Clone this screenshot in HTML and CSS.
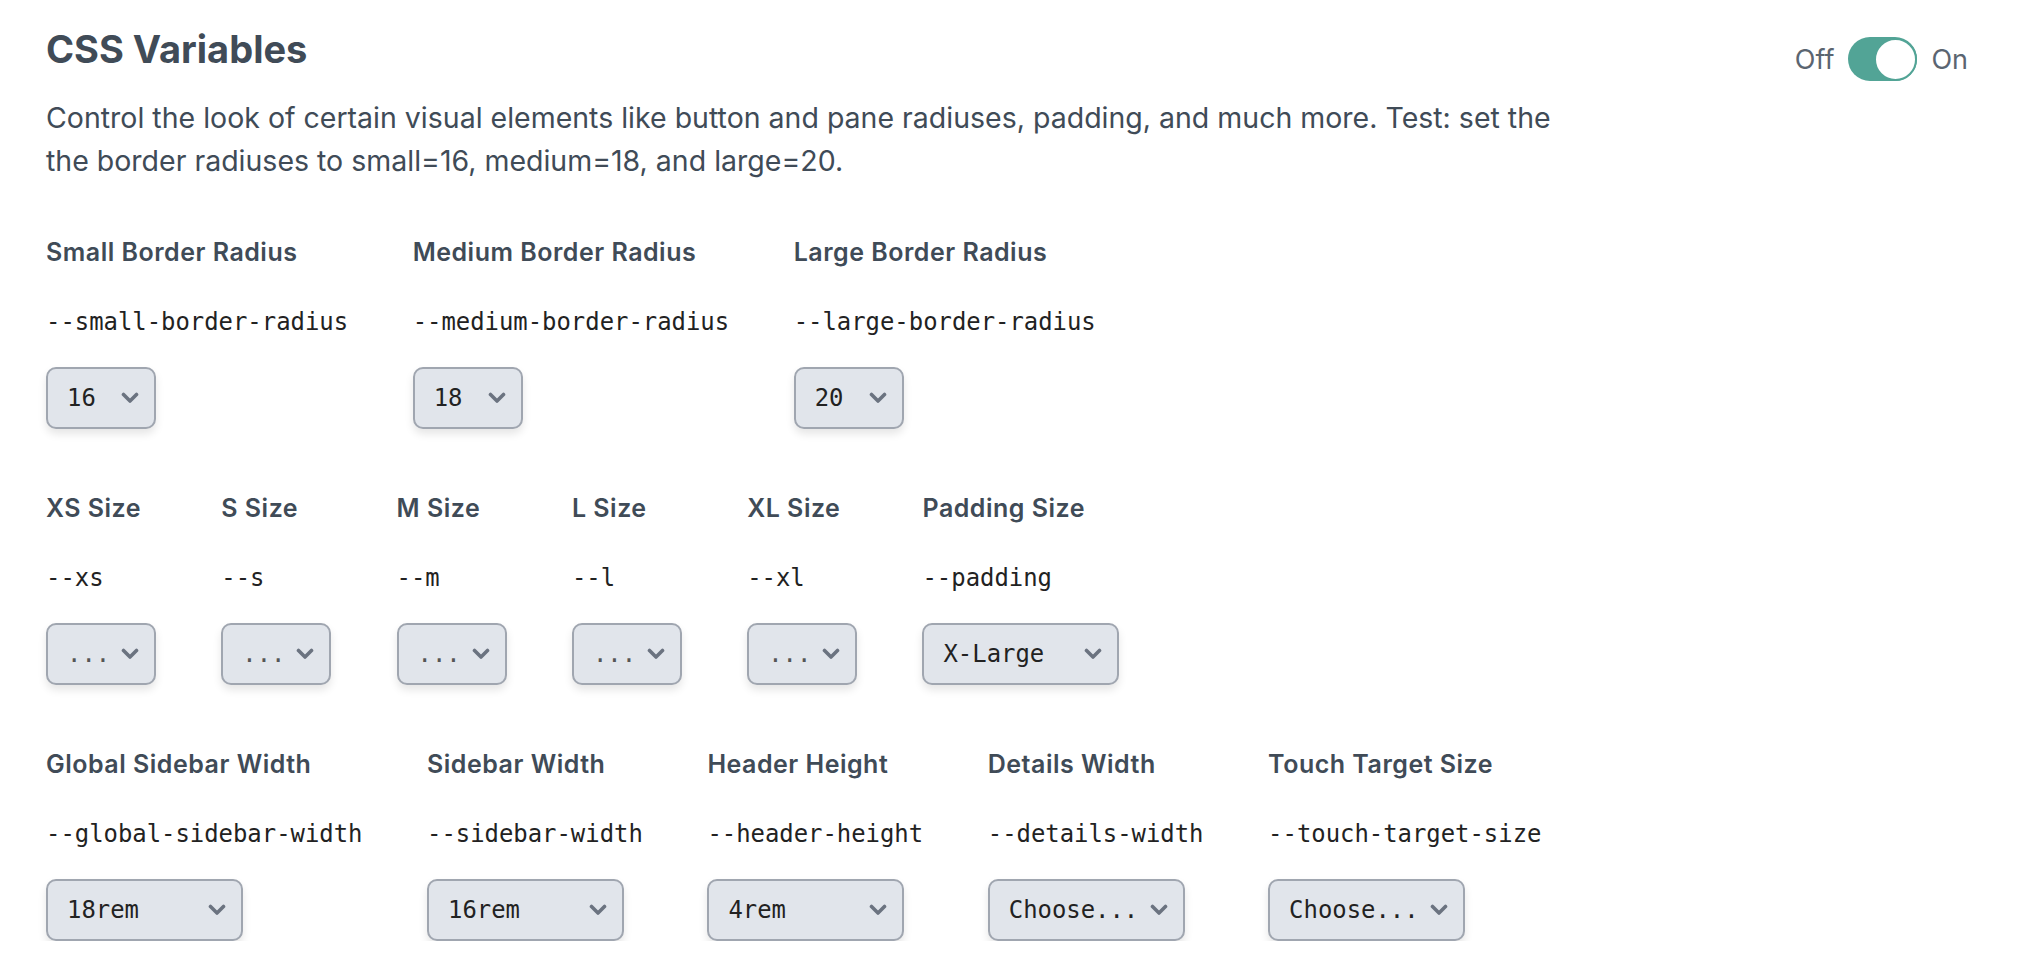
FILE: index.html
```html
<!DOCTYPE html>
<html lang="en">
<head>
<meta charset="utf-8">
<title>CSS Variables</title>
<link rel="stylesheet" href="styles.css">
</head>
<body>
<main class="page">
  <header class="head">
    <h1 class="title">CSS Variables</h1>
    <div class="toggle">
      <span class="toggle-text">Off</span>
      <span class="track"><span class="knob"></span></span>
      <span class="toggle-text">On</span>
    </div>
  </header>
  <p class="desc">Control the look of certain visual elements like button and pane radiuses, padding, and much more. Test: set the the border radiuses to small=16, medium=18, and large=20.</p>

  <section class="row">
    <div class="field">
      <h3 class="label">Small Border Radius</h3>
      <code class="var">--small-border-radius</code>
      <div class="select sm"><span class="val">16</span><svg class="chev" viewBox="0 0 18 12"><path d="M2.5 2.5 L9 9 L15.5 2.5"/></svg></div>
    </div>
    <div class="field">
      <h3 class="label">Medium Border Radius</h3>
      <code class="var">--medium-border-radius</code>
      <div class="select sm"><span class="val">18</span><svg class="chev" viewBox="0 0 18 12"><path d="M2.5 2.5 L9 9 L15.5 2.5"/></svg></div>
    </div>
    <div class="field">
      <h3 class="label">Large Border Radius</h3>
      <code class="var">--large-border-radius</code>
      <div class="select sm"><span class="val">20</span><svg class="chev" viewBox="0 0 18 12"><path d="M2.5 2.5 L9 9 L15.5 2.5"/></svg></div>
    </div>
  </section>

  <section class="row sizes">
    <div class="field">
      <h3 class="label">XS Size</h3>
      <code class="var">--xs</code>
      <div class="select sm"><span class="val dots">...</span><svg class="chev" viewBox="0 0 18 12"><path d="M2.5 2.5 L9 9 L15.5 2.5"/></svg></div>
    </div>
    <div class="field">
      <h3 class="label">S Size</h3>
      <code class="var">--s</code>
      <div class="select sm"><span class="val dots">...</span><svg class="chev" viewBox="0 0 18 12"><path d="M2.5 2.5 L9 9 L15.5 2.5"/></svg></div>
    </div>
    <div class="field">
      <h3 class="label">M Size</h3>
      <code class="var">--m</code>
      <div class="select sm"><span class="val dots">...</span><svg class="chev" viewBox="0 0 18 12"><path d="M2.5 2.5 L9 9 L15.5 2.5"/></svg></div>
    </div>
    <div class="field">
      <h3 class="label">L Size</h3>
      <code class="var">--l</code>
      <div class="select sm"><span class="val dots">...</span><svg class="chev" viewBox="0 0 18 12"><path d="M2.5 2.5 L9 9 L15.5 2.5"/></svg></div>
    </div>
    <div class="field">
      <h3 class="label">XL Size</h3>
      <code class="var">--xl</code>
      <div class="select sm"><span class="val dots">...</span><svg class="chev" viewBox="0 0 18 12"><path d="M2.5 2.5 L9 9 L15.5 2.5"/></svg></div>
    </div>
    <div class="field">
      <h3 class="label">Padding Size</h3>
      <code class="var">--padding</code>
      <div class="select lg"><span class="val">X-Large</span><svg class="chev" viewBox="0 0 18 12"><path d="M2.5 2.5 L9 9 L15.5 2.5"/></svg></div>
    </div>
  </section>

  <section class="row">
    <div class="field">
      <h3 class="label">Global Sidebar Width</h3>
      <code class="var">--global-sidebar-width</code>
      <div class="select lg"><span class="val">18rem</span><svg class="chev" viewBox="0 0 18 12"><path d="M2.5 2.5 L9 9 L15.5 2.5"/></svg></div>
    </div>
    <div class="field">
      <h3 class="label">Sidebar Width</h3>
      <code class="var">--sidebar-width</code>
      <div class="select lg"><span class="val">16rem</span><svg class="chev" viewBox="0 0 18 12"><path d="M2.5 2.5 L9 9 L15.5 2.5"/></svg></div>
    </div>
    <div class="field">
      <h3 class="label">Header Height</h3>
      <code class="var">--header-height</code>
      <div class="select lg"><span class="val">4rem</span><svg class="chev" viewBox="0 0 18 12"><path d="M2.5 2.5 L9 9 L15.5 2.5"/></svg></div>
    </div>
    <div class="field">
      <h3 class="label">Details Width</h3>
      <code class="var">--details-width</code>
      <div class="select lg"><span class="val">Choose...</span><svg class="chev" viewBox="0 0 18 12"><path d="M2.5 2.5 L9 9 L15.5 2.5"/></svg></div>
    </div>
    <div class="field">
      <h3 class="label">Touch Target Size</h3>
      <code class="var">--touch-target-size</code>
      <div class="select lg"><span class="val">Choose...</span><svg class="chev" viewBox="0 0 18 12"><path d="M2.5 2.5 L9 9 L15.5 2.5"/></svg></div>
    </div>
  </section>
</main>
</body>
</html>
```
FILE: styles.css
```css
html, body {
  margin: 0;
  padding: 0;
  background: #ffffff;
}

body {
  font-family: Inter, "Noto Sans", sans-serif;
  color: #404b57;
}

.page {
  padding: 27px 60px 0 46px;
}

.head {
  display: flex;
  justify-content: space-between;
  align-items: flex-start;
}

.title {
  margin: 0;
  font-size: 38px;
  line-height: 44px;
  font-weight: 700;
  color: #404b57;
  letter-spacing: 0;
}

.toggle {
  display: flex;
  align-items: center;
  gap: 14px;
  margin-top: 10px;
}

.toggle-text {
  font-size: 27px;
  color: #5b6571;
}

.track {
  display: flex;
  justify-content: flex-end;
  align-items: center;
  width: 69px;
  height: 44px;
  border-radius: 22px;
  background: #52a496;
}

.knob {
  width: 43px;
  height: 43px;
  border-radius: 50%;
  background: #ffffff;
  border: 2px solid #52a496;
  box-sizing: border-box;
}

.desc {
  margin: 15px 0 0 0;
  max-width: 1540px;
  font-size: 28.5px;
  line-height: 43px;
  color: #404b57;
}

.row {
  display: flex;
  gap: 64.6px;
  margin-top: 54px;
}

.row + .row {
  margin-top: 63px;
}

.row.sizes {
  gap: 65.3px;
}

.field {
  display: flex;
  flex-direction: column;
  align-items: flex-start;
  flex: none;
}

.label {
  margin: 0;
  font-size: 25px;
  line-height: 32px;
  font-weight: 600;
  letter-spacing: 0.5px;
  color: #404b57;
  white-space: nowrap;
}

.var {
  margin-top: 38px;
  font-family: "DejaVu Sans Mono", "Liberation Mono", monospace;
  font-size: 23.9px;
  line-height: 32px;
  color: #222;
  white-space: nowrap;
}

.select {
  margin-top: 29px;
  display: flex;
  align-items: center;
  justify-content: space-between;
  height: 62px;
  box-sizing: border-box;
  padding: 0 15px 0 19px;
  background: #e1e5eb;
  border: 2px solid #a0a6b0;
  border-radius: 10px;
  box-shadow: 0 5px 8px rgba(0, 0, 0, 0.10);
}

.select.sm { width: 110px; }
.select.lg { width: 197px; }

.val {
  font-family: "DejaVu Sans Mono", "Liberation Mono", monospace;
  font-size: 23.9px;
  color: #222;
  white-space: nowrap;
}

.val.dots {
  color: #555;
}

.chev {
  width: 18px;
  height: 12px;
  fill: none;
  stroke: #6b7380;
  stroke-width: 3.6;
  stroke-linecap: round;
  stroke-linejoin: round;
  flex: none;
}
```
